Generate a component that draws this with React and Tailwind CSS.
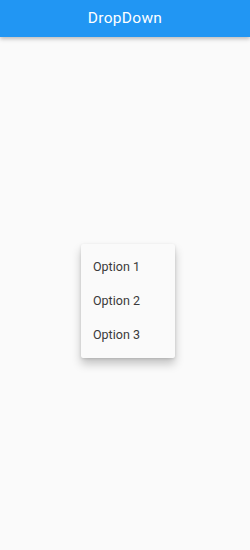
export default function App() {
  const options = ["Option 1", "Option 2", "Option 3"];
  return (
    <div className="w-[250px] h-[550px] bg-[#fafafa] flex flex-col font-['Roboto',sans-serif]">
      <header className="h-[37px] bg-[#2196f3] flex items-center justify-center shadow-[0_2px_4px_rgba(0,0,0,0.25)] z-10">
        <span className="text-white text-[15.5px] font-normal tracking-[0.3px]">DropDown</span>
      </header>
      <div className="flex-1 flex pl-[81px] pt-[207px]">
        <div className="w-[94px] h-[114px] bg-[#fafafa] rounded-[2px] py-[6px] shadow-[0_6px_10px_rgba(0,0,0,0.22),0_1px_3px_rgba(0,0,0,0.12)]">
          {options.map((o) => (
            <div key={o} className="h-[34px] flex items-center px-[12px] text-[12.5px] text-[#3a3a3a]">
              {o}
            </div>
          ))}
        </div>
      </div>
    </div>
  );
}
